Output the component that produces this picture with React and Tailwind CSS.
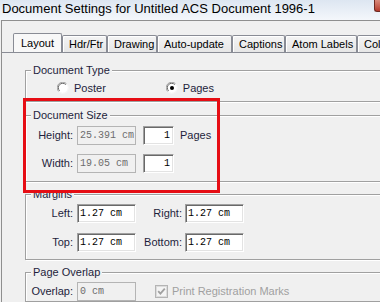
const tabs = [
  { label: "Layout", w: "w-[49px]", active: true },
  { label: "Hdr/Ftr", w: "w-[45px]" },
  { label: "Drawing", w: "w-[50px]" },
  { label: "Auto-update", w: "w-[75px]" },
  { label: "Captions", w: "w-[53px]" },
  { label: "Atom Labels", w: "w-[72px]" },
  { label: "Colors", w: "w-[60px]" },
];

function GroupBox({ title, className, children }) {
  return (
    <div className={`w-[420px] border border-[#a0a0a0] shadow-[inset_1px_1px_0_#fff,1px_1px_0_#fff] ${className}`}>
      <div className="-mt-[8px] ml-[5px] w-fit bg-[#f0f0f0] px-[2px] text-[11px] leading-[14px] text-[#1e1e3c]">
        {title}
      </div>
      {children}
    </div>
  );
}

function Field({ value, disabled, className = "w-[59px]", right }) {
  if (disabled) {
    return (
      <div className={`h-[19px] shrink-0 overflow-hidden whitespace-nowrap border border-[#b4b4b4] bg-[#f0f0f0] pl-[2px] font-['Liberation_Mono',monospace] text-[10px] leading-[17px] text-[#6d6d6d] ${className}`}>
        {value}
      </div>
    );
  }
  return (
    <div
      className={`h-[19px] shrink-0 overflow-hidden whitespace-nowrap border border-t-[#a0a0a0] border-l-[#a0a0a0] border-r-white border-b-white bg-white shadow-[inset_1px_1px_0_#696969,inset_-1px_-1px_0_#e3e3e3] font-['Liberation_Mono',monospace] text-[10px] leading-[17px] text-black ${
        right ? "pr-[3px] text-right" : "pl-[2px]"
      } ${className}`}
    >
      {value}
    </div>
  );
}

function Radio({ checked, label }) {
  return (
    <div className="flex items-center gap-[5px]">
      <svg width="12" height="12" viewBox="0 0 12 12">
        <circle cx="6" cy="6" r="5.5" fill="#fff" />
        <path d="M1.8 9.6 A5.2 5.2 0 0 1 9.6 1.8" fill="none" stroke="#a0a0a0" strokeWidth="1" />
        <path d="M2.6 8.8 A4.2 4.2 0 0 1 8.8 2.6" fill="none" stroke="#696969" strokeWidth="1" />
        <path d="M9.6 1.8 A5.2 5.2 0 0 1 1.8 9.6" fill="none" stroke="#f4f4f4" strokeWidth="1" />
        {checked && <circle cx="6" cy="6" r="2" fill="#000" />}
      </svg>
      <span>{label}</span>
    </div>
  );
}

function Label({ children, className = "w-[47px] mr-[4px]" }) {
  return <div className={`shrink-0 text-right ${className}`}>{children}</div>;
}

export default function App() {
  return (
    <div className="relative h-[302px] w-[380px] overflow-hidden bg-[#f0f0f0] font-['Liberation_Sans',Arial,sans-serif] text-[#1e1e3c]">
      <div className="flex h-[20px] bg-linear-to-b from-[#dde6f1] to-[#f4f7fb]">
        <div className="pl-[2px] pt-[1px] text-[13px] leading-[15px] text-black">
          Document Settings for Untitled ACS Document 1996-1
        </div>
        <div className="ml-auto h-[12px] w-[6px] rounded-bl-[3px] border-b border-l border-[#6e2a22] bg-linear-to-b from-[#d88a7c] to-[#b5392c]" />
      </div>

      <div className="ml-[1px] h-[282px] border-l border-t border-[#8f8f8f]">
        <div className="mt-[12px] flex h-[19px] items-end overflow-hidden pl-[11px] text-[11px] text-black">
          {tabs.map((t) =>
            t.active ? (
              <div
                key={t.label}
                className={`relative z-10 -mb-[1px] flex h-[20px] shrink-0 items-start justify-center rounded-t-[2px] border-l border-r border-t border-[#898c95] bg-[#f8f8f8] pt-[2px] leading-[14px] ${t.w}`}
              >
                {t.label}
              </div>
            ) : (
              <div
                key={t.label}
                className={`flex h-[17px] shrink-0 items-start whitespace-nowrap rounded-t-[2px] border-l border-r border-t border-[#898c95] bg-linear-to-b from-[#f4f4f4] to-[#e6e6e6] pl-[6px] pt-[1px] leading-[14px] shadow-[inset_1px_1px_0_#fff] ${t.w}`}
              >
                {t.label}
              </div>
            )
          )}
        </div>

        <div className="border-t border-[#898c95] pl-[23px] text-[11px]">
          <GroupBox title="Document Type" className="mt-[17px]">
            <div className="mt-[3px] mb-[5px] flex h-[16px] items-center pl-[31px]">
              <Radio label="Poster" />
              <div className="ml-[60px]">
                <Radio checked label="Pages" />
              </div>
            </div>
          </GroupBox>

          <GroupBox title="Document Size" className="mt-[13px]">
            <div className="mt-[4px] flex h-[19px] items-center">
              <Label>Height:</Label>
              <Field disabled value="25.391 cm" />
              <Field right value="1" className="ml-[7px] w-[31px]" />
              <div className="ml-[6px]">Pages</div>
            </div>
            <div className="mt-[9px] mb-[8px] flex h-[19px] items-center">
              <Label>Width:</Label>
              <Field disabled value="19.05 cm" />
              <Field right value="1" className="ml-[7px] w-[31px]" />
            </div>
          </GroupBox>

          <GroupBox title="Margins" className="mt-[12px]">
            <div className="mt-[3px] flex h-[19px] items-center">
              <Label>Left:</Label>
              <Field value="1.27 cm" />
              <Label className="w-[46px] mr-[3px]">Right:</Label>
              <Field value="1.27 cm" />
            </div>
            <div className="mt-[10px] mb-[7px] flex h-[19px] items-center">
              <Label>Top:</Label>
              <Field value="1.27 cm" />
              <Label className="w-[46px] mr-[3px]">Bottom:</Label>
              <Field value="1.27 cm" />
            </div>
          </GroupBox>

          <GroupBox title="Page Overlap" className="mt-[12px]">
            <div className="mt-[3px] flex h-[19px] items-center">
              <Label>Overlap:</Label>
              <Field disabled value="0 cm" />
              <div className="ml-[19px] flex items-center gap-[4px] text-[#a0a0a0]">
                <svg width="13" height="13" viewBox="0 0 13 13">
                  <rect x="0.5" y="0.5" width="12" height="12" fill="#f0f0f0" stroke="#b4b4b4" />
                  <rect x="1.5" y="1.5" width="10" height="10" fill="#f4f4f4" stroke="#dcdcdc" />
                  <path d="M3.2 6.2 L5.4 8.6 L9.8 3.6" fill="none" stroke="#a0a0a0" strokeWidth="1.8" />
                </svg>
                <span>Print Registration Marks</span>
              </div>
            </div>
          </GroupBox>
        </div>
      </div>

      <div className="absolute left-[23px] top-[98px] h-[95px] w-[197px] border-[3px] border-[#e60d14]" />
    </div>
  );
}
